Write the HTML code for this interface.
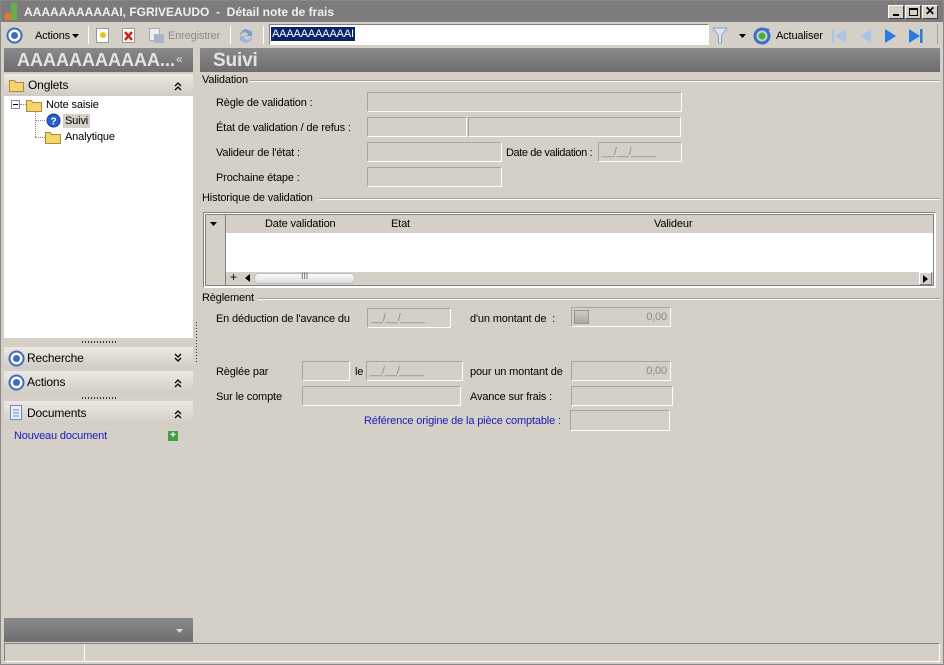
<!DOCTYPE html>
<html><head><meta charset="utf-8"><style>
*{margin:0;padding:0;box-sizing:border-box}
body{width:944px;height:665px;background:#d4d0c8;font-family:"Liberation Sans",Tahoma,sans-serif;font-size:11px;color:#000;position:relative;overflow:hidden;letter-spacing:-0.15px}
.a{position:absolute;white-space:nowrap}
.in{position:absolute;background:#d4d0c8;border:1px solid;border-color:#a9a59d #fff #fff #a9a59d;color:#888;font-size:11px;padding:3px 3px}
.hdr{position:absolute;background:linear-gradient(#8a8a8a,#6e6e6e);color:#e4e4e4;font-weight:bold}
.sec{position:absolute;background:linear-gradient(#ece9e3,#d0ccc4);font-size:12px}
.ln{position:absolute;height:2px;border-top:1px solid #a0a0a0;border-bottom:1px solid #fff}
.dots{position:absolute;height:2px;background:repeating-linear-gradient(90deg,#333 0 1px,transparent 1px 3px)}
.tb{position:absolute;top:26px;width:1px;height:18px;background:#a0a0a0;border-right:1px solid #fff}
.t{top:1px}
</style></head><body>
<div class="a" style="left:0;top:0;width:944px;height:665px;border:1px solid #888"></div>
<div class="a" style="left:1px;top:1px;width:942px;height:21px;background:#7d7b7b"></div>
<div class="a" style="left:5px;top:5px;width:6px;height:15px;background:#e87830"></div>
<div class="a" style="left:5px;top:5px;width:6px;height:8px;background:#7d7b7b"></div>
<div class="a" style="left:11px;top:3px;width:6px;height:17px;background:#6ab04a"></div>
<div class="a" style="left:24px;top:5px;color:#f0f0f0;font-weight:bold;font-size:12px;letter-spacing:0">AAAAAAAAAAAI, FGRIVEAUDO &nbsp;-&nbsp; Détail note de frais</div>
<div class="a" style="left:888px;top:5px;width:16px;height:14px;background:#d4d0c8;border:1px solid;border-color:#fff #404040 #404040 #fff"><div class="a" style="left:4px;top:8px;width:6px;height:2px;background:#000"></div></div>
<div class="a" style="left:905px;top:5px;width:16px;height:14px;background:#d4d0c8;border:1px solid;border-color:#fff #404040 #404040 #fff"><div class="a" style="left:3px;top:2px;width:9px;height:8px;border:1px solid #000;border-top-width:2px"></div></div>
<div class="a" style="left:922px;top:5px;width:16px;height:14px;background:#d4d0c8;border:1px solid;border-color:#fff #404040 #404040 #fff;font-weight:bold;font-size:12px;line-height:11px;text-align:center">✕</div>
<svg class="a" style="left:6px;top:27px" width="17" height="17"><circle cx="8.5" cy="8.5" r="7" fill="#fff" stroke="#3a6cc0" stroke-width="2"/><circle cx="8.5" cy="8.5" r="3.5" fill="#3a6cc0"/></svg>
<div class="a" style="left:35px;top:30px">Actions</div>
<svg class="a" style="left:72px;top:34px" width="8" height="5"><path d="M0 0h7L3.5 4z" fill="#000"/></svg>
<div class="tb" style="left:88px"></div>
<svg class="a" style="left:96px;top:28px" width="14" height="16"><rect x="0.5" y="0.5" width="12" height="14" fill="#fff" stroke="#999"/><circle cx="7" cy="7" r="3" fill="#f0c020"/></svg>
<svg class="a" style="left:122px;top:28px" width="14" height="16"><rect x="0.5" y="0.5" width="12" height="14" fill="#fff" stroke="#999"/><path d="M3 4l7 8M10 4l-7 8" stroke="#d02020" stroke-width="2.5"/></svg>
<svg class="a" style="left:149px;top:28px" width="16" height="16"><rect x="0.5" y="0.5" width="10" height="12" fill="#eee" stroke="#aaa"/><rect x="5" y="6" width="10" height="9" fill="#a8b4c8"/></svg>
<div class="a" style="left:168px;top:30px;color:#8a8a8a">Enregistrer</div>
<div class="tb" style="left:230px"></div>
<svg class="a" style="left:237px;top:27px" width="18" height="18"><path d="M3 8a6 6 0 0 1 11-3l1-2v6h-6l2-2a4 4 0 0 0-7 1z" fill="#7a9cc8"/><path d="M15 10a6 6 0 0 1-11 3l-1 2v-6h6l-2 2a4 4 0 0 0 7-1z" fill="#9ab4d8"/></svg>
<div class="tb" style="left:263px"></div>
<div class="a" style="left:269px;top:24px;width:440px;height:21px;background:#fff;border:1px solid;border-color:#808080 #fff #fff #808080"></div>
<div class="a" style="left:271px;top:27px;background:#0a246a;color:#fff;padding:0 1px;line-height:14px">AAAAAAAAAAAI</div>
<svg class="a" style="left:712px;top:26px" width="16" height="18"><path d="M1 2h14l-5.5 7v8h-3V9z" fill="#dce6f4" stroke="#8aa4c8"/></svg>
<svg class="a" style="left:739px;top:34px" width="8" height="5"><path d="M0 0h7L3.5 4z" fill="#000"/></svg>
<svg class="a" style="left:753px;top:27px" width="18" height="18"><circle cx="9" cy="9" r="7" fill="none" stroke="#3a70c8" stroke-width="3"/><circle cx="9" cy="9" r="3.5" fill="#40b040"/><path d="M12 1l5 1-3 4z" fill="#3a70c8"/></svg>
<div class="a" style="left:776px;top:30px">Actualiser</div>
<svg class="a" style="left:831px;top:28px" width="16" height="16"><rect x="1" y="1" width="2" height="14" fill="#a8c4e8"/><path d="M15 1v14L4 8z" fill="#a8c4e8"/></svg>
<svg class="a" style="left:857px;top:28px" width="16" height="16"><path d="M14 1v14L3 8z" fill="#a8c4e8"/></svg>
<svg class="a" style="left:883px;top:28px" width="16" height="16"><path d="M2 1v14l11-7z" fill="#2a7ae0"/></svg>
<svg class="a" style="left:908px;top:28px" width="16" height="16"><path d="M1 1v14l11-7z" fill="#2a7ae0"/><rect x="12" y="1" width="2.5" height="14" fill="#2a7ae0"/></svg>
<div class="a" style="left:937px;top:24px;width:1px;height:20px;background:#a0a0a0"></div>
<!-- left panel -->
<div class="hdr" style="left:4px;top:48px;width:189px;height:24px;font-size:18px;padding:2px 0 0 13px;letter-spacing:0">AAAAAAAAAAA...<span style="font-size:12px;font-weight:normal;position:absolute;left:172px;top:4px">«</span></div>
<div class="sec" style="left:4px;top:74px;width:189px;height:22px"><svg class="a" style="left:5px;top:4px" width="16" height="14"><path d="M0.5 2.5h5l1 2h8v9h-14z" fill="#f4d470" stroke="#b08a30"/></svg><span class="a" style="left:24px;top:4px">Onglets</span><svg class="a" style="left:170px;top:7px" width="8" height="10"><path d="M1 5l3-3 3 3M1 9l3-3 3 3" stroke="#000" stroke-width="1.3" fill="none"/></svg></div>
<div class="a" style="left:4px;top:96px;width:189px;height:242px;background:#fff"></div>
<div class="a" style="left:11px;top:100px;width:9px;height:9px;border:1px solid #888;background:#fff"><div class="a" style="left:1px;top:3px;width:5px;height:1px;background:#000"></div></div>
<div class="a" style="left:20px;top:104px;width:6px;border-top:1px dotted #888"></div>
<svg class="a" style="left:26px;top:98px" width="17" height="14"><path d="M0.5 2.5h5l1 2h9v9h-15z" fill="#f4d470" stroke="#b08a30"/></svg>
<div class="a" style="left:46px;top:99px">Note saisie</div>
<div class="a" style="left:35px;top:112px;height:25px;border-left:1px dotted #888"></div>
<div class="a" style="left:35px;top:120px;width:10px;border-top:1px dotted #888"></div>
<div class="a" style="left:35px;top:137px;width:10px;border-top:1px dotted #888"></div>
<svg class="a" style="left:46px;top:113px" width="15" height="15"><circle cx="7.5" cy="7.5" r="6.5" fill="#2a5ec8" stroke="#1a3e98"/><text x="4.5" y="11.5" fill="#fff" font-size="10" font-weight="bold" font-family="Liberation Sans">?</text></svg>
<div class="a" style="left:63px;top:114px;background:#d4d0c8;padding:0 2px;line-height:14px">Suivi</div>
<svg class="a" style="left:45px;top:130px" width="17" height="14"><path d="M0.5 2.5h5l1 2h9v9h-15z" fill="#f4d470" stroke="#b08a30"/></svg>
<div class="a" style="left:65px;top:131px">Analytique</div>
<div class="dots" style="left:82px;top:341px;width:34px"></div>
<div class="sec" style="left:4px;top:347px;width:189px;height:22px"><svg class="a" style="left:4px;top:3px" width="17" height="17"><circle cx="8.5" cy="8.5" r="7" fill="#fff" stroke="#3a6cc0" stroke-width="2"/><circle cx="8.5" cy="8.5" r="3.5" fill="#3a6cc0"/></svg><span class="a" style="left:23px;top:4px">Recherche</span><svg class="a" style="left:170px;top:6px" width="8" height="10"><path d="M1 1l3 3 3-3M1 5l3 3 3-3" stroke="#000" stroke-width="1.3" fill="none"/></svg></div>
<div class="sec" style="left:4px;top:371px;width:189px;height:23px"><svg class="a" style="left:4px;top:3px" width="17" height="17"><circle cx="8.5" cy="8.5" r="7" fill="#fff" stroke="#3a6cc0" stroke-width="2"/><circle cx="8.5" cy="8.5" r="3.5" fill="#3a6cc0"/></svg><span class="a" style="left:23px;top:4px">Actions</span><svg class="a" style="left:170px;top:7px" width="8" height="10"><path d="M1 5l3-3 3 3M1 9l3-3 3 3" stroke="#000" stroke-width="1.3" fill="none"/></svg></div>
<div class="dots" style="left:82px;top:397px;width:34px"></div>
<div class="sec" style="left:4px;top:401px;width:189px;height:24px"><svg class="a" style="left:6px;top:4px" width="13" height="16"><rect x="0.5" y="0.5" width="11" height="14" fill="#e8eef8" stroke="#6a8ac8"/><path d="M3 5h6M3 8h6M3 11h6" stroke="#6a8ac8"/></svg><span class="a" style="left:23px;top:5px">Documents</span><svg class="a" style="left:170px;top:8px" width="8" height="10"><path d="M1 5l3-3 3 3M1 9l3-3 3 3" stroke="#000" stroke-width="1.3" fill="none"/></svg></div>
<div class="a" style="left:14px;top:430px;color:#1a1ab8">Nouveau document</div>
<div class="a" style="left:168px;top:431px;width:10px;height:10px;background:#40a040;color:#fff;font-size:10px;line-height:9px;text-align:center;font-weight:bold">+</div>
<div class="a" style="left:196px;top:322px;height:40px;width:1px;background:repeating-linear-gradient(#333 0 1px,transparent 1px 3px)"></div>
<div class="hdr" style="left:4px;top:618px;width:189px;height:24px"><svg class="a" style="left:172px;top:11px" width="7" height="4"><path d="M0 0h7L3.5 4z" fill="#ddd"/></svg></div>
<div class="a" style="left:4px;top:643px;width:936px;height:19px;border:1px solid;border-color:#808080 #fff #fff #808080"></div>
<div class="a" style="left:84px;top:644px;width:1px;height:17px;background:#808080;border-right:1px solid #fff"></div>
<!-- right -->
<div class="hdr" style="left:200px;top:48px;width:740px;height:24px;font-size:19px;padding:2px 0 0 13px">Suivi</div>
<div class="a" style="left:202px;top:74px">Validation</div><div class="ln" style="left:250px;top:80px;width:690px"></div>
<div class="a" style="left:216px;top:97px">Règle de validation :</div>
<div class="in" style="left:367px;top:92px;width:315px;height:20px"></div>
<div class="a" style="left:216px;top:122px">État de validation / de refus :</div>
<div class="in" style="left:367px;top:117px;width:100px;height:20px"></div>
<div class="in" style="left:468px;top:117px;width:213px;height:20px"></div>
<div class="a" style="left:216px;top:147px">Valideur de l'état :</div>
<div class="in" style="left:367px;top:142px;width:135px;height:20px"></div>
<div class="a" style="left:506px;top:147px;letter-spacing:-0.4px">Date de validation :</div>
<div class="in" style="left:598px;top:142px;width:84px;height:20px">__/__/____</div>
<div class="a" style="left:216px;top:172px">Prochaine étape :</div>
<div class="in" style="left:367px;top:167px;width:135px;height:20px"></div>
<div class="a" style="left:202px;top:192px">Historique de validation</div><div class="ln" style="left:319px;top:198px;width:621px"></div>
<div class="a" style="left:203px;top:212px;width:733px;height:76px;border:1px solid;border-color:#808080 #fff #fff #808080;background:#fff"></div>
<div class="a" style="left:205px;top:214px;width:729px;height:72px;border:1px solid #808080;background:#fff"></div>
<div class="a" style="left:206px;top:215px;width:20px;height:70px;background:#d4d0c8;border-right:1px solid #808080"></div>
<svg class="a" style="left:210px;top:222px" width="8" height="5"><path d="M0 0h7L3.5 4z" fill="#000"/></svg>
<div class="a" style="left:226px;top:215px;width:707px;height:18px;background:#d4d0c8"></div>
<div class="a" style="left:265px;top:218px">Date validation</div>
<div class="a" style="left:391px;top:218px">Etat</div>
<div class="a" style="left:654px;top:218px">Valideur</div>
<div class="a" style="left:226px;top:272px;width:707px;height:13px;background:#d4d0c8"></div>
<div class="a" style="left:230px;top:270px;font-size:12px">+</div>
<svg class="a" style="left:245px;top:274px" width="6" height="8"><path d="M5 0v8L0 4z" fill="#000"/></svg>
<div class="a" style="left:254px;top:273px;width:101px;height:11px;border-radius:5px;background:linear-gradient(#fafafa,#dcdcdc);border:1px solid #c0c0c0"></div>
<div class="a" style="left:301px;top:271px;font-size:9px;color:#666">III</div>
<div class="a" style="left:919px;top:272px;width:13px;height:13px;background:#d4d0c8;border:1px solid;border-color:#fff #808080 #808080 #fff"></div>
<svg class="a" style="left:923px;top:275px" width="5" height="8"><path d="M0 0v8l5-4z" fill="#000"/></svg>
<div class="a" style="left:202px;top:292px">Règlement</div><div class="ln" style="left:258px;top:298px;width:682px"></div>
<div class="a" style="left:216px;top:313px">En déduction de l'avance du</div>
<div class="in" style="left:367px;top:308px;width:84px;height:20px">__/__/____</div>
<div class="a" style="left:470px;top:313px">d'un montant de &nbsp;:</div>
<div class="in" style="left:571px;top:307px;width:100px;height:20px;text-align:right">0,00</div>
<div class="a" style="left:574px;top:310px;width:15px;height:14px;background:linear-gradient(#d0ccc4,#aaa6a0);border:1px solid #9a968e"></div>
<div class="a" style="left:216px;top:366px">Règlée par</div>
<div class="in" style="left:302px;top:361px;width:48px;height:20px"></div>
<div class="a" style="left:355px;top:366px">le</div>
<div class="in" style="left:366px;top:361px;width:97px;height:20px">__/__/____</div>
<div class="a" style="left:470px;top:366px">pour un montant de</div>
<div class="in" style="left:571px;top:361px;width:100px;height:20px;text-align:right">0,00</div>
<div class="a" style="left:216px;top:391px">Sur le compte</div>
<div class="in" style="left:302px;top:386px;width:159px;height:20px"></div>
<div class="a" style="left:470px;top:391px">Avance sur frais :</div>
<div class="in" style="left:571px;top:386px;width:102px;height:20px"></div>
<div class="a" style="left:364px;top:415px;color:#1a1ab8">Référence origine de la pièce comptable :</div>
<div class="in" style="left:570px;top:410px;width:100px;height:21px"></div>
</body></html>
